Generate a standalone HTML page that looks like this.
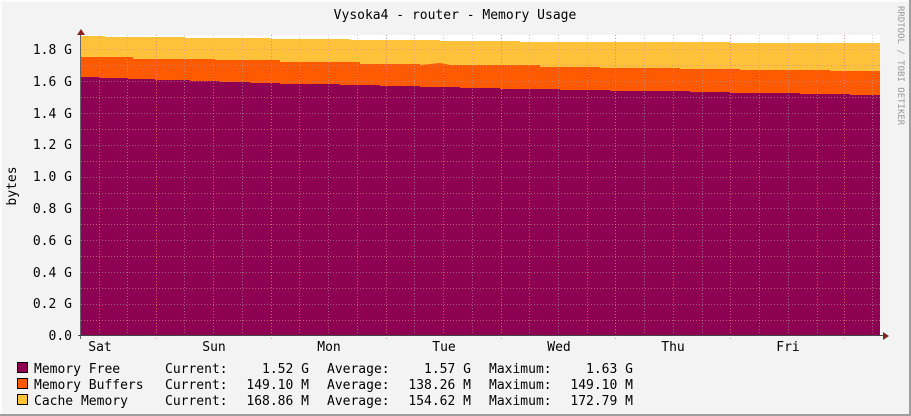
<!DOCTYPE html>
<html><head><meta charset="utf-8"><style>
html,body{margin:0;padding:0;background:#f3f3f3}
svg{display:block}
text{font-family:"DejaVu Sans Mono","Liberation Mono",monospace;font-size:13px;fill:#000}
</style></head><body>
<svg width="911" height="416" viewBox="0 0 911 416" xmlns="http://www.w3.org/2000/svg">
<rect x="0" y="0" width="911" height="416" fill="#f3f3f3"/>
<rect x="0" y="0" width="911" height="2" fill="#fcfcfc"/>
<rect x="0" y="0" width="2" height="416" fill="#fcfcfc"/>
<rect x="909" y="0" width="2" height="416" fill="#9e9e9e"/>
<rect x="0" y="414" width="911" height="2" fill="#9e9e9e"/>

<text x="455" y="19" text-anchor="middle">Vysoka4 - router - Memory Usage</text>
<text transform="translate(898,6) rotate(90)" style="font-size:9px;fill:#999">RRDTOOL / TOBI OETIKER</text>
<text transform="translate(16,186) rotate(-90)" text-anchor="middle">bytes</text>

<rect x="81" y="35" width="799" height="301" fill="#ffffff"/>
<!-- cache (yellow) -->
<polygon fill="#ffc23a" points="81,336 81,36 105,36 105,37 185,37 185,38 270,38 270,39 350,39 350,40 440,40 440,41 520,41 520,42 620,42 620,42 730,42 730,43 880,43 880,336"/>
<!-- buffers (orange) -->
<polygon fill="#ff5a00" points="81,336 81,57 133,57 133,59 215,59 215,60 280,60 280,62 360,62 360,64 420,64 420,65 440,63 450,65 540,65 540,67 600,67 600,68 680,68 680,69 740,69 740,70 830,70 830,71 880,71 880,336"/>
<!-- free (purple) -->
<polygon fill="#8d0052" points="81,336 81,77 100,77 100,78 128,78 128,79 155,79 155,80 190,80 190,81 220,81 220,82 250,82 250,83 280,83 280,84 340,84 340,85 380,85 380,86 420,86 420,87 460,87 460,88 500,88 500,89 560,89 560,90 610,90 610,91 690,91 690,92 730,92 730,93 800,93 800,94 850,94 850,95 880,95 880,336"/>

<g stroke="#d08888" stroke-width="1" stroke-dasharray="1,2" opacity="0.7">
<line x1="81" y1="320.5" x2="880" y2="320.5"/><line x1="81" y1="288.5" x2="880" y2="288.5"/>
<line x1="81" y1="256.5" x2="880" y2="256.5"/><line x1="81" y1="224.5" x2="880" y2="224.5"/>
<line x1="81" y1="193.5" x2="880" y2="193.5"/><line x1="81" y1="161.5" x2="880" y2="161.5"/>
<line x1="81" y1="129.5" x2="880" y2="129.5"/><line x1="81" y1="97.5" x2="880" y2="97.5"/>
<line x1="81" y1="65.5" x2="880" y2="65.5"/>
</g>
<g stroke="#b89a9a" stroke-width="1" stroke-dasharray="1,2" opacity="0.6">
<line x1="81" y1="304.5" x2="880" y2="304.5"/><line x1="81" y1="272.5" x2="880" y2="272.5"/>
<line x1="81" y1="240.5" x2="880" y2="240.5"/><line x1="81" y1="208.5" x2="880" y2="208.5"/>
<line x1="81" y1="177.5" x2="880" y2="177.5"/><line x1="81" y1="145.5" x2="880" y2="145.5"/>
<line x1="81" y1="113.5" x2="880" y2="113.5"/><line x1="81" y1="81.5" x2="880" y2="81.5"/>
<line x1="81" y1="49.5" x2="880" y2="49.5"/>
</g>
<g stroke="#b8a8a8" stroke-width="1" stroke-dasharray="1,2" opacity="0.6">
<line x1="99.5" y1="35" x2="99.5" y2="336"/><line x1="127.5" y1="35" x2="127.5" y2="336"/><line x1="184.5" y1="35" x2="184.5" y2="336"/><line x1="213.5" y1="35" x2="213.5" y2="336"/><line x1="242.5" y1="35" x2="242.5" y2="336"/>
<line x1="299.5" y1="35" x2="299.5" y2="336"/><line x1="328.5" y1="35" x2="328.5" y2="336"/><line x1="357.5" y1="35" x2="357.5" y2="336"/>
<line x1="414.5" y1="35" x2="414.5" y2="336"/><line x1="443.5" y1="35" x2="443.5" y2="336"/><line x1="472.5" y1="35" x2="472.5" y2="336"/>
<line x1="529.5" y1="35" x2="529.5" y2="336"/><line x1="558.5" y1="35" x2="558.5" y2="336"/><line x1="587.5" y1="35" x2="587.5" y2="336"/>
<line x1="644.5" y1="35" x2="644.5" y2="336"/><line x1="673.5" y1="35" x2="673.5" y2="336"/><line x1="702.5" y1="35" x2="702.5" y2="336"/>
<line x1="759.5" y1="35" x2="759.5" y2="336"/><line x1="788.5" y1="35" x2="788.5" y2="336"/><line x1="817.5" y1="35" x2="817.5" y2="336"/>
<line x1="872.5" y1="35" x2="872.5" y2="336"/>
</g>
<g stroke="#e87878" stroke-width="1" stroke-dasharray="1,2" opacity="0.8">
<line x1="156.5" y1="35" x2="156.5" y2="339"/><line x1="271.5" y1="35" x2="271.5" y2="339"/><line x1="386.5" y1="35" x2="386.5" y2="339"/>
<line x1="501.5" y1="35" x2="501.5" y2="339"/><line x1="615.5" y1="35" x2="615.5" y2="339"/><line x1="730.5" y1="35" x2="730.5" y2="339"/><line x1="844.5" y1="35" x2="844.5" y2="339"/>
</g>

<line x1="80.5" y1="32" x2="80.5" y2="339" stroke="#666" stroke-width="1"/>
<line x1="78" y1="335.5" x2="885" y2="335.5" stroke="#444" stroke-width="1"/>
<polygon points="77,35 81,29 85,35" fill="#8a2020"/>
<polygon points="883,332 889,336 883,340" fill="#8a2020"/>

<g text-anchor="end">
<text x="72" y="340">0.0</text><text x="72" y="308">0.2 G</text><text x="72" y="277">0.4 G</text>
<text x="72" y="245">0.6 G</text><text x="72" y="213">0.8 G</text><text x="72" y="181">1.0 G</text>
<text x="72" y="149">1.2 G</text><text x="72" y="118">1.4 G</text><text x="72" y="86">1.6 G</text>
<text x="72" y="54">1.8 G</text>
</g>
<g text-anchor="middle">
<text x="100" y="351">Sat</text><text x="214" y="351">Sun</text><text x="329" y="351">Mon</text>
<text x="444" y="351">Tue</text><text x="559" y="351">Wed</text><text x="673" y="351">Thu</text><text x="788" y="351">Fri</text>
</g>

<rect x="17.5" y="362.5" width="10" height="10" fill="#8d0052" stroke="#000"/>
<rect x="17.5" y="378.5" width="10" height="10" fill="#ff5a00" stroke="#000"/>
<rect x="17.5" y="394.5" width="10" height="10" fill="#ffc23a" stroke="#000"/>
<g>
<text x="34" y="373">Memory Free</text><text x="34" y="389">Memory Buffers</text><text x="34" y="405">Cache Memory</text>
<text x="165" y="373">Current:</text><text x="165" y="389">Current:</text><text x="165" y="405">Current:</text>
<text x="327" y="373">Average:</text><text x="327" y="389">Average:</text><text x="327" y="405">Average:</text>
<text x="489" y="373">Maximum:</text><text x="489" y="389">Maximum:</text><text x="489" y="405">Maximum:</text>
</g>
<g text-anchor="end">
<text x="309" y="373">1.52 G</text><text x="309" y="389">149.10 M</text><text x="309" y="405">168.86 M</text>
<text x="471" y="373">1.57 G</text><text x="471" y="389">138.26 M</text><text x="471" y="405">154.62 M</text>
<text x="633" y="373">1.63 G</text><text x="633" y="389">149.10 M</text><text x="633" y="405">172.79 M</text>
</g>
</svg>
</body></html>
